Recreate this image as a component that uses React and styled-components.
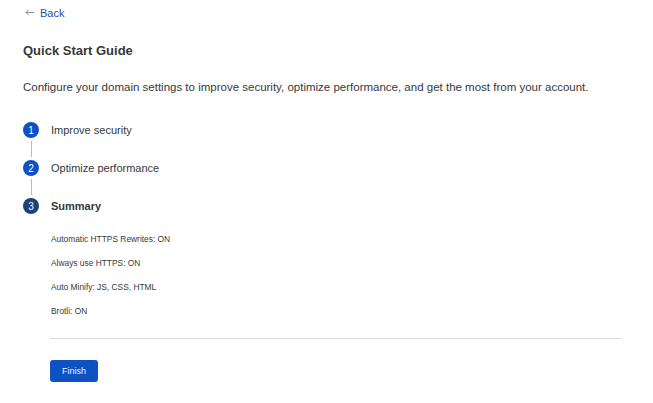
import styled, { createGlobalStyle } from "styled-components";

const Global = createGlobalStyle`
  html, body { margin: 0; padding: 0; background: #fff; }
  body { font-family: "Liberation Sans", Arial, sans-serif; color: #36393a; }
`;

const Page = styled.div`
  padding: 2px 23px 0 23px;
  width: 653px;
  box-sizing: border-box;
`;

const BackLink = styled.a`
  display: inline-flex;
  align-items: center;
  gap: 6px;
  margin-left: 2px;
  font-size: 11px;
  color: #1a4fa3;
  text-decoration: none;
  height: 14px;
`;

const Arrow = styled.svg`
  width: 9px;
  height: 7px;
  color: #8a8f94;
`;

const Title = styled.h1`
  margin: 23px 0 0 0;
  font-size: 13px;
  font-weight: 700;
  color: #36393a;
  line-height: 16px;
`;

const Intro = styled.p`
  margin: 21px 0 0 0;
  font-size: 11.5px;
  line-height: 14px;
  color: #36393a;
`;

const Steps = styled.ol`
  list-style: none;
  margin: 28px 0 0 0;
  padding: 0;
`;

const Step = styled.li`
  display: flex;
  align-items: center;
  gap: 12px;
  height: 16px;
`;

const Badge = styled.span`
  width: 16px;
  height: 16px;
  border-radius: 50%;
  background: ${(p) => (p.$current ? "#1d3f7b" : "#0f51c4")};
  color: #fff;
  font-size: 10px;
  display: flex;
  align-items: center;
  justify-content: center;
`;

const StepLabel = styled.span`
  font-size: 11px;
  font-weight: ${(p) => (p.$current ? 700 : 400)};
  color: #36393a;
`;

const Connector = styled.div`
  width: 1px;
  height: 16px;
  margin: 3px 0 3px 8px;
  background: #b8bcc0;
`;

const SummaryList = styled.div`
  display: flex;
  flex-direction: column;
  gap: 16px;
  margin: 21px 0 0 28px;
`;

const SummaryItem = styled.div`
  font-size: 8.4px;
  line-height: 8px;
  color: #36393a;
`;

const Divider = styled.hr`
  border: none;
  border-top: 1px solid #d9d9d9;
  margin: 23px 9px 0 27px;
`;

const FinishButton = styled.button`
  margin: 21px 0 0 27px;
  width: 48px;
  height: 22px;
  border: none;
  border-radius: 3px;
  background: #0d51c2;
  color: #eef2f8;
  font-family: "Liberation Sans", Arial, sans-serif;
  font-size: 9px;
  padding: 0;
`;

const steps = ["Improve security", "Optimize performance", "Summary"];
const summary = [
  "Automatic HTTPS Rewrites: ON",
  "Always use HTTPS: ON",
  "Auto Minify: JS, CSS, HTML",
  "Brotli: ON",
];

export default function App() {
  return (
    <Page>
      <Global />
      <BackLink href="#">
        <Arrow viewBox="0 0 9 7" fill="none" stroke="currentColor" strokeWidth="1">
          <path d="M9 3.5H1M3.8 0.7 1 3.5l2.8 2.8" />
        </Arrow>
        Back
      </BackLink>
      <Title>Quick Start Guide</Title>
      <Intro>
        Configure your domain settings to improve security, optimize performance, and get the most from your account.
      </Intro>
      <Steps>
        {steps.map((s, i) => {
          const current = i === steps.length - 1;
          return (
            <div key={s}>
              <Step>
                <Badge $current={current}>{i + 1}</Badge>
                <StepLabel $current={current}>{s}</StepLabel>
              </Step>
              {!current && <Connector />}
            </div>
          );
        })}
      </Steps>
      <SummaryList>
        {summary.map((t) => (
          <SummaryItem key={t}>{t}</SummaryItem>
        ))}
      </SummaryList>
      <Divider />
      <FinishButton>Finish</FinishButton>
    </Page>
  );
}
